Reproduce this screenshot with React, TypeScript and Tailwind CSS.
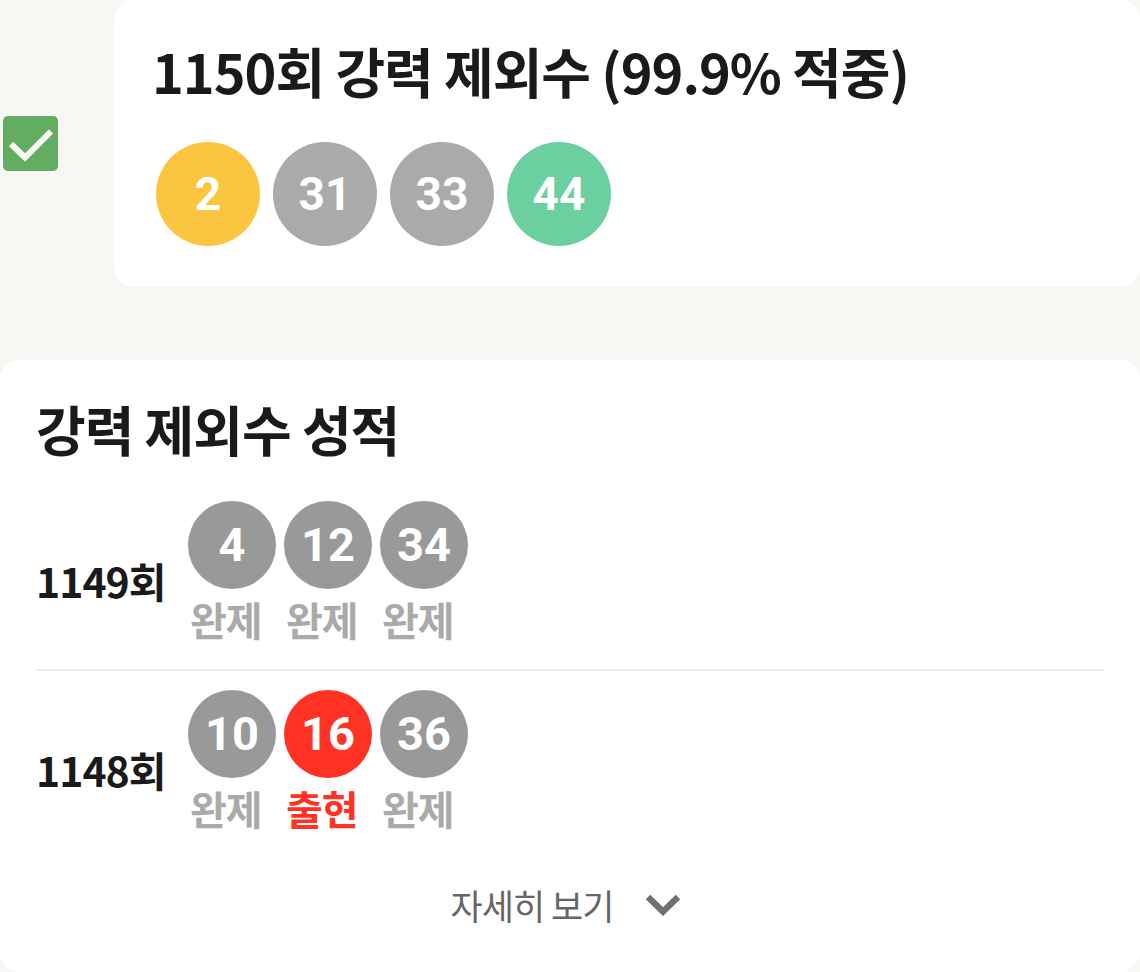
import React from "react";

type Ball = { n: number; color: string };
type Row = { round: string; balls: { n: number; hit: boolean }[] };

const FONT = { fontFamily: '"Noto Sans CJK KR", "Noto Sans", sans-serif' };
const NUM_FONT = { fontFamily: 'Roboto, "Noto Sans", sans-serif' };

const topBalls: Ball[] = [
  { n: 2, color: "bg-[#fcc53f]" },
  { n: 31, color: "bg-[#aaaaaa]" },
  { n: 33, color: "bg-[#aaaaaa]" },
  { n: 44, color: "bg-[#6ccf9f]" },
];

const rows: Row[] = [
  { round: "1149회", balls: [{ n: 4, hit: false }, { n: 12, hit: false }, { n: 34, hit: false }] },
  { round: "1148회", balls: [{ n: 10, hit: false }, { n: 16, hit: true }, { n: 36, hit: false }] },
];

function CheckBox() {
  return (
    <div className="w-[55px] h-[55px] rounded-[5px] bg-[#62ad62] shrink-0">
      <svg width="55" height="55" viewBox="0 0 55 55" fill="none">
        <path d="M8 28 L22 41.5 L48 15.5" stroke="#fafaf5" strokeWidth="6" />
      </svg>
    </div>
  );
}

function ResultRow({ row }: { row: Row }) {
  return (
    <div className="flex items-center">
      <div className="w-[152px] text-[41px] font-bold text-[#1a1a1a] tracking-[-1px] pt-[12px]">{row.round}</div>
      <div className="flex gap-[8px]">
        {row.balls.map((b) => (
          <div key={b.n} className="flex flex-col items-start w-[88px]">
            <div
              className={`w-[88px] h-[88px] rounded-full flex items-center justify-center text-white text-[47px] font-bold ${
                b.hit ? "bg-[#ff3224]" : "bg-[#999999]"
              }`}
              style={NUM_FONT}
            >
              {b.n}
            </div>
            <div
              className={`pl-[2px] text-[40px] font-bold leading-[60px] tracking-[-1px] whitespace-nowrap ${
                b.hit ? "text-[#ff3224]" : "text-[#aaaaaa]"
              }`}
            >
              {b.hit ? "출현" : "완제"}
            </div>
          </div>
        ))}
      </div>
    </div>
  );
}

export default function App() {
  return (
    <div className="min-h-screen bg-[#f8f7f4] overflow-hidden" style={FONT}>
      <div className="flex items-center gap-[56px] pl-[3px]">
        <CheckBox />
        <div className="flex-1 h-[287px] bg-white rounded-[20px] pl-[38px] pt-[32px]">
          <h1 className="text-[54px] font-bold text-[#1a1a1a] leading-[78px] tracking-[-1px] whitespace-nowrap">
            1150회 강력 제외수 (99.9% 적중)
          </h1>
          <div className="flex gap-[13px] mt-[32px] ml-[4px]">
            {topBalls.map((b) => (
              <div
                key={b.n}
                className={`w-[104px] h-[104px] rounded-full flex items-center justify-center text-white text-[46px] font-bold ${b.color}`}
                style={NUM_FONT}
              >
                {b.n}
              </div>
            ))}
          </div>
        </div>
      </div>

      <div className="mt-[73px] h-[612px] bg-white rounded-[20px] px-[36px] pt-[30px]">
        <h2 className="text-[54px] font-bold text-[#1a1a1a] leading-[78px] tracking-[-1px]">강력 제외수 성적</h2>
        <div className="mt-[33px]">
          <ResultRow row={rows[0]} />
        </div>
        <div className="h-[2px] bg-[#ececec] mt-[20px] mb-[19px]" />
        <ResultRow row={rows[1]} />
        <div className="flex items-center justify-center gap-[32px] mt-[42px] pr-[8px]">
          <span className="text-[35px] leading-[50px] text-[#666666] tracking-[-1px]">자세히 보기</span>
          <svg width="36" height="22" viewBox="0 0 36 22" fill="none">
            <path d="M3 3 L18 17.5 L33 3" stroke="#707070" strokeWidth="6.5" />
          </svg>
        </div>
      </div>
    </div>
  );
}
